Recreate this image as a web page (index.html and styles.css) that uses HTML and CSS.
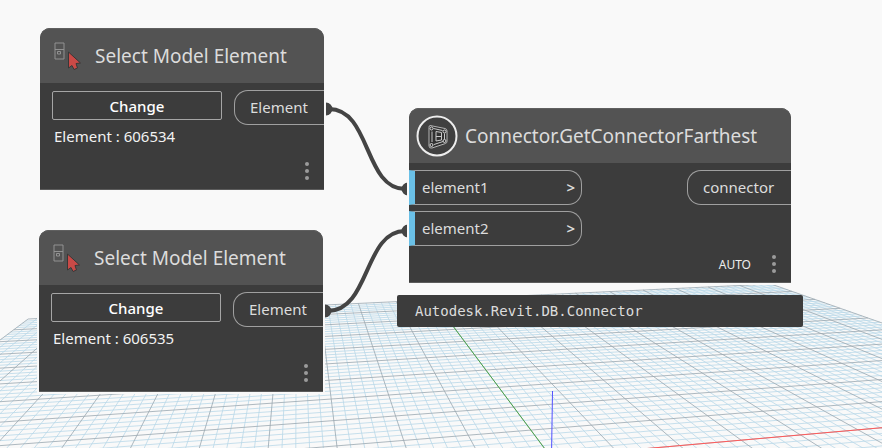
FILE: index.html
```html
<!DOCTYPE html>
<html lang="en">
<head>
<meta charset="utf-8">
<title>Graph workspace</title>
<link rel="stylesheet" href="styles.css">
</head>
<body>
<main class="canvas">
  <svg class="scene" viewBox="0 0 882 448" preserveAspectRatio="xMinYMin slice" aria-hidden="true">
    <path id="minor" class="grid-minor"/>
    <path id="major" class="grid-major"/>
    <path id="axis-x" class="axis-x"/>
    <path id="axis-y" class="axis-y"/>
    <path class="axis-z" d="M552.5 391L551.5 457"/>
  </svg>

  <svg class="wires" width="882" height="448" aria-hidden="true">
    <path class="wire" d="M329 109C371 109 364 189 405 189M328 311C370 311 364 231 405 231"/>
    <path class="plug" d="M326 102.500A6.500 6.500 0 0 1 326 115.500ZM325 304.500A6.500 6.500 0 0 1 325 317.500ZM408 182.500A6.500 6.500 0 0 0 408 195.500ZM408 224.500A6.500 6.500 0 0 0 408 237.500Z"/>
  </svg>

  <article class="node node-first">
    <header class="node-head">
      <svg class="pick-icon" viewBox="0 0 28 28" aria-hidden="true">
        <path class="pick-frame" d="M2 1h9v16h-9zM2 7.500h9M4.500 9.500h3v2.500h-3z"/>
        <path class="pick-arrow" d="M15.500 10v16l3.500-2.500 2 4 3.500-1.500-1.500-4.500 4.500-0.500z"/>
      </svg>
      <h2 class="node-title">Select Model Element</h2>
    </header>
    <div class="node-body">
      <div class="picker">
        <button class="change" type="button">Change</button>
        <p class="picked">Element : 606534</p>
      </div>
      <div class="port port-out">Element</div>
    </div>
    <footer class="node-foot">
      <button class="more" type="button" aria-label="Node menu"><svg viewBox="0 0 4 18" aria-hidden="true"><circle cx="2" cy="2" r="2"/><circle cx="2" cy="9" r="2"/><circle cx="2" cy="16" r="2"/></svg></button>
    </footer>
  </article>

  <article class="node node-second">
    <header class="node-head">
      <svg class="pick-icon" viewBox="0 0 28 28" aria-hidden="true">
        <path class="pick-frame" d="M2 1h9v16h-9zM2 7.500h9M4.500 9.500h3v2.500h-3z"/>
        <path class="pick-arrow" d="M15.500 10v16l3.500-2.500 2 4 3.500-1.500-1.500-4.500 4.500-0.500z"/>
      </svg>
      <h2 class="node-title">Select Model Element</h2>
    </header>
    <div class="node-body">
      <div class="picker">
        <button class="change" type="button">Change</button>
        <p class="picked">Element : 606535</p>
      </div>
      <div class="port port-out">Element</div>
    </div>
    <footer class="node-foot">
      <button class="more" type="button" aria-label="Node menu"><svg viewBox="0 0 4 18" aria-hidden="true"><circle cx="2" cy="2" r="2"/><circle cx="2" cy="9" r="2"/><circle cx="2" cy="16" r="2"/></svg></button>
    </footer>
  </article>

  <article class="node node-third">
    <header class="node-head head-round">
      <svg class="round-icon" viewBox="0 0 42 42" aria-hidden="true">
        <circle class="ring" cx="21" cy="21" r="19.500"/>
        <path class="part-edge" d="M14 10.500L29 13.500Q31 14 31 16V26.500Q31 28 29.500 28.500L16 33Q13 33.500 13 31V12.500Q13 10.500 14 10.500Z"/>
        <path class="part-core" d="M20 16.500L25.500 17.500V25L20 26ZM20 21.500H25.500M16 16.500V27M28.500 18.500V24.500M17.500 13.500L26.500 15.500M18 29.500L27 26.500"/>
        <circle class="bolt" cx="15.500" cy="13.500" r="1.500"/><circle class="bolt" cx="28.500" cy="16.500" r="1.500"/><circle class="bolt" cx="15.500" cy="30" r="1.500"/><circle class="bolt" cx="28.500" cy="26" r="1.500"/>
      </svg>
      <h2 class="node-title">Connector.GetConnectorFarthest</h2>
    </header>
    <div class="node-body body-ports">
      <div class="inputs">
        <div class="port port-in"><span>element1</span><span class="chevron">&gt;</span></div>
        <div class="port port-in"><span>element2</span><span class="chevron">&gt;</span></div>
      </div>
      <div class="port port-out port-wide">connector</div>
    </div>
    <footer class="node-foot">
      <span class="lacing">AUTO</span>
      <button class="more" type="button" aria-label="Node menu"><svg viewBox="0 0 4 18" aria-hidden="true"><circle cx="2" cy="2" r="2"/><circle cx="2" cy="9" r="2"/><circle cx="2" cy="16" r="2"/></svg></button>
    </footer>
  </article>

  <output class="preview">Autodesk.Revit.DB.Connector</output>
</main>
<script src="grid.js"></script>
</body>
</html>
```
FILE: styles.css
```css
* { box-sizing: border-box; }

body {
  margin: 0;
  background: #f9f9f9;
  color: #dcdcdc;
  font-family: "Noto Sans", "Open Sans", sans-serif;
  font-size: 15px;
}

.canvas {
  position: relative;
  min-height: 100vh;
  overflow: hidden;
}

.scene {
  position: absolute;
  inset: 0;
  width: 100%;
  height: 100%;
  fill: none;
}

.grid-minor { stroke: #b9d8e8; stroke-opacity: 0.8; }
.grid-major { stroke: #9aa8b0; stroke-opacity: 0.8; }
.axis-x { stroke: #ff5a5a; }
.axis-y { stroke: #4ba54b; }
.axis-z { stroke: #5050ff; }

.wires {
  position: absolute;
  top: 0;
  left: 0;
}

.wire { fill: none; stroke: #444444; stroke-width: 4; }
.plug { fill: #444444; }

.node {
  position: absolute;
  display: flex;
  flex-direction: column;
  width: 284px;
  background: #3c3c3c;
  border-radius: 10px 10px 0 0;
  box-shadow: 0 0 0 2px #f9f9f9;
}

.node-first { left: 40px; top: 28px; }
.node-second { left: 39px; top: 230px; }
.node-third { left: 409px; top: 108px; width: 382px; }

.node-head {
  display: flex;
  align-items: center;
  gap: 14px;
  height: 55px;
  padding-left: 13px;
  background: #535353;
  border-top: 1px solid #606060;
  border-radius: 10px 10px 0 0;
}

.head-round { gap: 7px; padding-left: 7px; }

.node-title {
  margin: 0;
  font-size: 19px;
  font-weight: 400;
  line-height: 28px;
  white-space: nowrap;
}

.pick-icon { width: 28px; height: 28px; flex: none; }
.pick-frame { fill: none; stroke: #929292; }
.pick-arrow { fill: #c94a47; stroke: #383838; }

.round-icon { width: 42px; height: 42px; flex: none; }
.ring { fill: #404040; stroke: #ededed; stroke-width: 2; }
.part-edge { fill: #303030; stroke: #b5b5b5; }
.part-core { fill: none; stroke: #c8c8c8; }
.bolt { fill: #303030; stroke: #d8d8d8; }

.node-body {
  display: flex;
  justify-content: space-between;
  align-items: flex-start;
  padding: 7px 0 0 12px;
}

.body-ports { padding-left: 0; }

.picker { width: 170px; padding-top: 1px; }

.change {
  display: block;
  width: 100%;
  height: 29px;
  padding: 0;
  border: 1px solid #a6a6a6;
  border-radius: 2px;
  background: none;
  color: #ffffff;
  font: inherit;
  font-weight: 500;
  line-height: 24px;
}

.picked {
  margin: 5px 0 6px 2px;
  color: #f2f2f2;
  line-height: 22px;
}

.port {
  display: flex;
  align-items: center;
  height: 35px;
  padding-bottom: 2px;
  border: 1px solid #a0a0a0;
}

.port-out {
  width: 90px;
  padding-left: 15px;
  border-right: 0;
  border-radius: 14px 0 0 14px;
}

.port-wide { width: 104px; }

.inputs { display: grid; gap: 6px; width: 173px; }

.port-in {
  justify-content: space-between;
  padding: 0 6px 2px 7px;
  border-left: 6px solid #6ac0e7;
  border-radius: 0 14px 14px 0;
}

.chevron { font-weight: 600; }

.node-foot {
  display: flex;
  justify-content: flex-end;
  align-items: center;
  gap: 21px;
  height: 37px;
  padding: 0 15px 0 0;
  border-bottom: 1px solid #5c5c5c;
}

.lacing { color: #ededed; font-size: 12px; }

.more {
  display: flex;
  padding: 0;
  border: 0;
  background: none;
}

.more svg { width: 4px; height: 18px; fill: #9b9b9b; }

.preview {
  position: absolute;
  left: 397px;
  top: 295px;
  width: 406px;
  padding: 6px 18px;
  border-radius: 2px;
  background: #3c3c3c;
  font-family: "DejaVu Sans Mono", "Liberation Mono", monospace;
  font-size: 14px;
  line-height: 20px;
}
```
FILE: grid.js
```js
// Ground plane: 10 major cells each way from the origin, 5 minor cells per major.
function project(u, v) {
  const w = 1 + 0.01696 * u + 0.0862 * v;
  const x = (551 + 75.94 * u + 25.6 * v) / w;
  const y = (457 + 1.855 * u + 10.14 * v) / w;
  return x.toFixed(1) + " " + y.toFixed(1);
}

function line(u1, v1, u2, v2) {
  return "M" + project(u1, v1) + "L" + project(u2, v2);
}

const near = -3;
let minor = "";
let major = "";
for (let i = -50; i <= 50; i++) {
  const k = i / 5;
  let d = line(k, near, k, 10);
  if (k >= near) d += line(-10, k, 10, k);
  if (i % 5 === 0) major += d;
  else minor += d;
}

document.getElementById("minor").setAttribute("d", minor);
document.getElementById("major").setAttribute("d", major);
document.getElementById("axis-x").setAttribute("d", line(0, 0, 10, 0));
document.getElementById("axis-y").setAttribute("d", line(0, 0, 0, 10));
```
